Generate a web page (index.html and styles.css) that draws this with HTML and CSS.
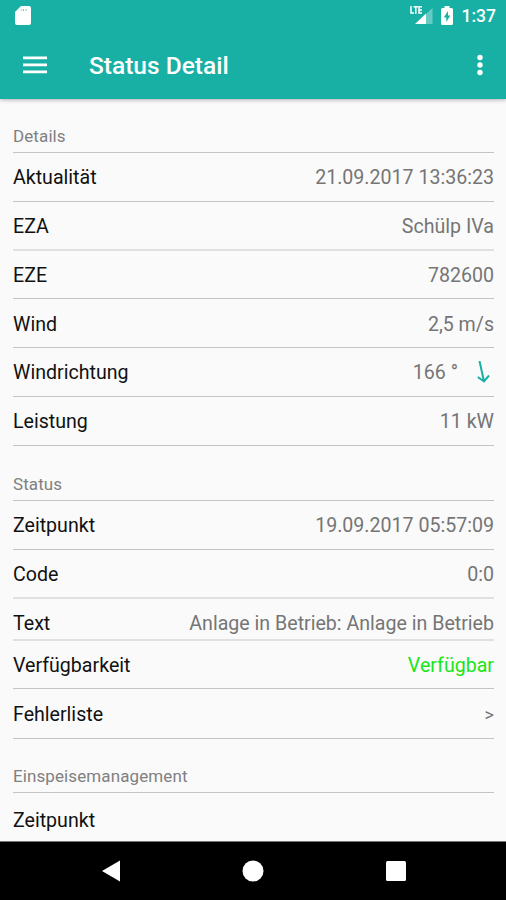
FILE: index.html
```html
<!DOCTYPE html>
<html lang="de">
<head>
<meta charset="utf-8">
<meta name="viewport" content="width=device-width, initial-scale=1">
<title>Status Detail</title>
<link rel="stylesheet" href="styles.css">
</head>
<body>

<header class="top">
  <div class="statusbar">
    <svg class="sdcard" width="16" height="19" viewBox="0 0 16 19">
      <path fill="#fff" fill-rule="evenodd" d="M6 0H14Q16 0 16 2V17Q16 19 14 19H2Q0 19 0 17V6Z"/>
      <path fill="none" stroke="#18b0a4" stroke-opacity=".6" d="M6 4H7.500M8.500 3V5M10 4H12"/>
    </svg>
    <svg class="signal" width="24" height="20" viewBox="0 0 24 20">
      <path fill="#fff" opacity=".35" d="M16 8L22.500 2V18H16Z"/>
      <path fill="#fff" d="M5 18L16 7.500V18Z"/>
      <path fill="none" stroke="#fff" stroke-width="1.500" d="M1 0V7H4M3.500 .8H8M5.800 1V8M12 .8H9V7H12M9 4H12"/>
    </svg>
    <svg class="battery" width="12" height="19" viewBox="0 0 12 19">
      <path fill="#fff" d="M3.500 0H8.500V2H10.500Q12 2 12 3.500V17.500Q12 19 10.500 19H1.500Q0 19 0 17.500V3.500Q0 2 1.500 2H3.500Z"/>
      <path fill="#18b0a4" d="M7 5L2.800 11.500H5.300V16L9.300 9.500H7Z"/>
    </svg>
    <span class="clock">1:37</span>
  </div>
  <div class="toolbar">
    <svg width="24" height="18" viewBox="0 0 24 18">
      <path fill="#fff" d="M0 .5H24V3.200H0ZM0 7.500H24V10.200H0ZM0 14.500H24V17.200H0Z"/>
    </svg>
    <h1>Status Detail</h1>
    <svg width="6" height="22" viewBox="0 0 6 22">
      <circle cx="3" cy="3.500" r="2.700" fill="#fff"/>
      <circle cx="3" cy="11" r="2.700" fill="#fff"/>
      <circle cx="3" cy="18.500" r="2.700" fill="#fff"/>
    </svg>
  </div>
</header>

<main class="content">
  <h2>Details</h2>
  <div class="row"><span>Aktualität</span><span class="value">21.09.2017 13:36:23</span></div>
  <div class="row soft"><span>EZA</span><span class="value">Schülp IVa</span></div>
  <div class="row short"><span>EZE</span><span class="value">782600</span></div>
  <div class="row low"><span>Wind</span><span class="value">2,5 m/s</span></div>
  <div class="row"><span>Windrichtung</span>
    <span class="value wind">166 °
      <svg width="14" height="24" viewBox="0 0 14 24">
        <path fill="none" stroke="#18b0a4" stroke-width="2" d="M3.500 0L8 20.500M1.800 16L8 20.500L13 14.500"/>
      </svg>
    </span>
  </div>
  <div class="row"><span>Leistung</span><span class="value">11 kW</span></div>

  <h2 class="tall">Status</h2>
  <div class="row"><span>Zeitpunkt</span><span class="value">19.09.2017 05:57:09</span></div>
  <div class="row soft"><span>Code</span><span class="value">0:0</span></div>
  <div class="row soft tight"><span>Text</span><span class="value">Anlage in Betrieb: Anlage in Betrieb</span></div>
  <div class="row short"><span>Verfügbarkeit</span><span class="value ok">Verfügbar</span></div>
  <div class="row low last"><span>Fehlerliste</span><span class="value more">&gt;</span></div>

  <h2>Einspeisemanagement</h2>
  <div class="row cut"><span>Zeitpunkt</span></div>
</main>

<nav class="navbar">
  <svg width="18" height="22" viewBox="0 0 18 22"><path fill="#fff" d="M0 11L18 .5V21.500Z"/></svg>
  <svg width="22" height="22" viewBox="0 0 22 22"><circle cx="11" cy="11" r="10.500" fill="#fff"/></svg>
  <svg width="20" height="20" viewBox="0 0 20 20"><rect width="20" height="20" rx="1.500" fill="#fff"/></svg>
</nav>

</body>
</html>
```
FILE: styles.css
```css
* {
  box-sizing: border-box;
}

body {
  margin: 0;
  height: 900px;
  overflow: hidden;
  display: flex;
  flex-direction: column;
  background: #fafafa;
  color: #111;
  font-family: Roboto, "Liberation Sans", sans-serif;
}

svg {
  display: block;
  flex: none;
}

.top {
  height: 99px;
  flex: none;
  background: #18b0a4;
  color: #fff;
  box-shadow: 0 1px 4px rgba(0, 0, 0, 0.3);
}

.statusbar {
  height: 32px;
  padding: 0 10px 0 15px;
  display: flex;
  align-items: center;
}

.sdcard {
  margin-top: -2px;
  margin-right: auto;
}

.signal {
  margin-right: 7px;
}

.battery {
  margin-top: -2px;
  margin-right: 9px;
}

.clock {
  font-size: 17.5px;
  font-weight: 500;
}

.toolbar {
  height: 66px;
  padding: 0 23px;
  display: flex;
  align-items: center;
}

.toolbar h1 {
  flex: 1;
  margin: 0 0 0 42px;
  font-size: 24.5px;
  font-weight: 500;
}

.content {
  height: 742px;
  flex: none;
  padding: 0 12px 0 13px;
}

.content h2 {
  height: 54px;
  margin: 0;
  padding-top: 27px;
  border-bottom: 1px solid #c4c4c4;
  color: #808080;
  font-size: 17px;
  font-weight: 400;
  line-height: 20px;
  letter-spacing: 0.1px;
}

.content h2.tall {
  height: 55px;
  padding-top: 28px;
}

.row {
  height: 49px;
  padding-top: 13px;
  display: flex;
  justify-content: space-between;
  border-bottom: 1px solid #c4c4c4;
  font-size: 19.6px;
  line-height: 24px;
}

/* rows with the wider, lighter divider */
.row.soft {
  border-bottom: 2px solid #e0e0e0;
}

.row.short {
  height: 48px;
}

.row.tight {
  height: 42px;
}

.row.low {
  padding-top: 14px;
}

.row.last {
  height: 50px;
}

.row.cut {
  height: 48px;
  padding-top: 16px;
  border-bottom: 0;
}

.value {
  color: #757575;
}

.wind {
  display: flex;
  gap: 18px;
  padding-right: 4px;
}

.ok {
  color: #1be51b;
}

.more {
  font-size: 18px;
}

.navbar {
  flex: 1;
  padding: 0 100px 0 102px;
  display: flex;
  align-items: center;
  justify-content: space-between;
  background: #000;
  border-top: 1px solid #777;
}
```
